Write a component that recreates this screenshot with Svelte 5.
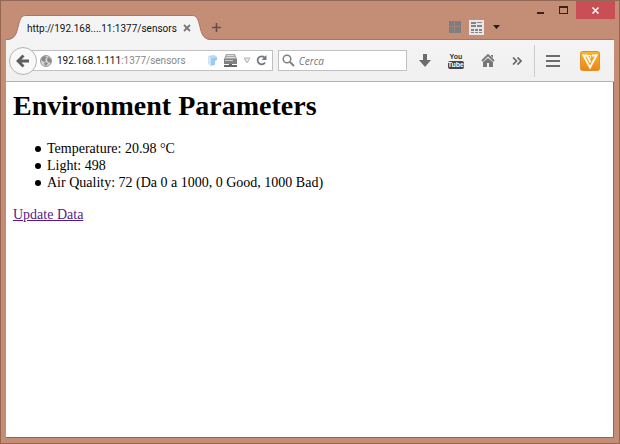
<script>
  let search = $state('');

  const readings = [
    { name: 'Temperature', value: '20.98 °C' },
    { name: 'Light', value: '498' },
    { name: 'Air Quality', value: '72 (Da 0 a 1000, 0 Good, 1000 Bad)' }
  ];
</script>

<div class="window">
  <header class="titlebar">
    <div class="tab">
      <svg class="curve" width="20" height="25" viewBox="0 0 20 25">
        <path class="fill" d="M0 25C8 25 10 20 11.500 14L13 8C14.500 3 16 .5 20 .5V25Z" />
        <path class="edge" d="M0 24.500C8 24.500 10 20 11.500 14L13 8C14.500 3 16 .5 20 .5" />
      </svg>
      <div class="tab-body">
        <span class="tab-title">http://192.168....11:1377/sensors</span>
        <button class="plain" aria-label="Close tab">
          <svg width="8" height="8" viewBox="0 0 8 8"><path d="M1 1l6 6M7 1L1 7" stroke="#777" stroke-width="1.800" /></svg>
        </button>
      </div>
      <svg class="curve" width="20" height="25" viewBox="0 0 20 25">
        <path class="fill" d="M20 25C12 25 10 20 8.500 14L7 8C5.500 3 4 .5 0 .5V25Z" />
        <path class="edge" d="M20 24.500C12 24.500 10 20 8.500 14L7 8C5.500 3 4 .5 0 .5" />
      </svg>
    </div>
    <button class="plain new-tab" aria-label="New tab">
      <svg width="9" height="9" viewBox="0 0 9 9"><path d="M4.500 0v9M0 4.500h9" stroke="#5f4f52" stroke-width="1.600" /></svg>
    </button>

    <div class="groups">
      <button class="plain" aria-label="Tile tabs">
        <svg width="14" height="14" viewBox="0 0 14 14">
          <path fill="#7b7f83" d="M1 1h5v5H1zM7 1h6v5H7zM1 7h5v6H1zM7 7h6v6H7z" />
          <path d="M6.500 1v12M1 6.500h12" stroke="#a08377" />
        </svg>
      </button>
      <button class="plain" aria-label="Tab groups">
        <svg width="15" height="15" viewBox="0 0 15 15">
          <path fill="#e9e6e4" d="M0 0h15v15H0z" />
          <path fill="#7f858a" d="M2 2h5v2H2zM2 5h5v2H2zM8 2h5v1H8zM8 5h5v2H8zM2 9h3v2H2zM6 9h3v2H6zM10 9h3v2h-3zM2 12h3v1H2zM6 12h3v1H6zM10 12h3v1h-3z" />
        </svg>
      </button>
      <button class="plain arrow" aria-label="List all tabs">
        <svg width="7" height="4" viewBox="0 0 7 4"><path fill="#2b1c16" d="M0 0h7L3.500 4z" /></svg>
      </button>
    </div>

    <div class="controls">
      <button class="plain" aria-label="Minimize">
        <svg width="9" height="10" viewBox="0 0 9 10"><path fill="#3c2015" d="M1 7h7v2H1z" /></svg>
      </button>
      <button class="plain" aria-label="Maximize">
        <svg width="9" height="8" viewBox="0 0 9 8"><path fill="#3c2015" fill-rule="evenodd" d="M0 0h9v8H0zM1 2v5h7V2z" /></svg>
      </button>
      <button class="plain close" aria-label="Close">
        <svg width="7" height="7" viewBox="0 0 7 7"><path d="M.5.5l6 6M6.500.5l-6 6" stroke="#fff" stroke-width="1.500" /></svg>
      </button>
    </div>
  </header>

  <nav class="toolbar">
    <button class="back" aria-label="Back">
      <svg width="14" height="14" viewBox="0 0 14 14"><path d="M13 7H3M7.500 1.500L2 7l5.500 5.500" fill="none" stroke="#5e5e5e" stroke-width="2.800" /></svg>
    </button>
    <div class="urlbar">
      <svg width="12" height="12" viewBox="0 0 12 12">
        <circle cx="6" cy="6" r="5.500" fill="#d4d4d4" stroke="#999" />
        <path fill="#8a8a8a" d="M2 2l3-1 2 2-2 1 1 2-2 1-3-2zM8 2l3 2v4l-3-1-1-2zM5 7l3 1-2 3-2-2z" />
      </svg>
      <a class="address" href="#sensors"><b>192.168.1.111</b>:1377/sensors</a>
      <svg width="11" height="13" viewBox="0 0 11 13">
        <path fill="#9ccbf2" d="M3 4l7-1v3l-2 1v4l-5 1z" />
        <path fill="#cfe6fa" d="M1 2l3 2v8l-3-2z" />
        <path fill="#b4d8f6" d="M1 2l6-1 3 2-6 1z" />
      </svg>
      <svg width="15" height="14" viewBox="0 0 15 14">
        <path fill="#a8a8a8" d="M3 0h9l2 5v4H1V5z" />
        <path d="M4 1.500h7M3 3.500h9" stroke="#ddd" />
        <path fill="#808080" d="M1 5h13v5H1z" />
        <path fill="#c8c8c8" d="M2 6h8v1H2z" />
        <path fill="#666" d="M6 10h3v1h5v2H1v-2h5z" />
      </svg>
      <button class="plain" aria-label="Show history">
        <svg width="8" height="7" viewBox="0 0 8 7"><path fill="#e8e8e8" stroke="#b5b5b5" d="M1 1h6L4 6z" /></svg>
      </button>
      <button class="plain" aria-label="Reload">
        <svg width="11" height="11" viewBox="0 0 11 11">
          <path d="M8.500 2.500A4 4 0 1 0 9 7.500" fill="none" stroke="#737a83" stroke-width="1.800" />
          <path fill="#737a83" d="M10.500 0v5H5.500z" />
        </svg>
      </button>
    </div>
    <label class="search">
      <svg width="13" height="13" viewBox="0 0 13 13">
        <circle cx="5" cy="5" r="3.800" fill="none" stroke="#808080" stroke-width="1.500" />
        <path d="M8 8l4 4" stroke="#808080" stroke-width="2" />
      </svg>
      <input type="text" placeholder="Cerca" aria-label="Cerca" bind:value={search} />
    </label>
    <div class="actions">
      <button class="plain" aria-label="Downloads">
        <svg width="12" height="13" viewBox="0 0 12 13"><path fill="#6c6c6c" d="M4 0h4v6h4l-6 7-6-7h4z" /></svg>
      </button>
      <button class="plain youtube" aria-label="YouTube">
        <span>You</span>
        <span class="tube">Tube</span>
      </button>
      <button class="plain" aria-label="Home">
        <svg width="14" height="13" viewBox="0 0 14 13">
          <path d="M1 7l6-6 6 6" fill="none" stroke="#777" stroke-width="1.800" />
          <path fill="#777" d="M10 1h2v3l-2-2zM7 4l5 4v5H8V9H6v4H2V8z" />
        </svg>
      </button>
      <button class="plain" aria-label="More tools">
        <svg width="10" height="8" viewBox="0 0 10 8"><path d="M1 .5L4.500 4 1 7.500M5.500.5L9 4 5.500 7.500" fill="none" stroke="#666" stroke-width="1.700" /></svg>
      </button>
    </div>
    <button class="plain menu" aria-label="Menu">
      <svg width="14" height="12" viewBox="0 0 14 12"><path fill="#6c6c6c" d="M0 0h14v2H0zM0 5h14v2H0zM0 10h14v2H0z" /></svg>
    </button>
    <button class="plain addon" aria-label="Download helper">
      <svg width="20" height="20" viewBox="0 0 20 20">
        <defs>
          <linearGradient id="orange" x2="0" y2="1">
            <stop offset="0" stop-color="#fbb62c" />
            <stop offset="1" stop-color="#ee8410" />
          </linearGradient>
        </defs>
        <rect x=".5" y=".5" width="19" height="19" rx="2" fill="url(#orange)" stroke="#dc9130" />
        <path d="M12 4.500h4.500L10 16.500 3.500 4.500H7l3.500 7" fill="none" stroke="#fff" stroke-width="1.800" />
        <path d="M8 4.500h3L9.500 8" fill="none" stroke="#fff" />
      </svg>
    </button>
  </nav>

  <main>
    <h1>Environment Parameters</h1>
    <ul>
      {#each readings as reading}
        <li>{reading.name}: {reading.value}</li>
      {/each}
    </ul>
    <a class="update" href="#update">Update Data</a>
  </main>
</div>

<style>
  .window {
    box-sizing: border-box;
    min-height: 100vh;
    display: flex;
    flex-direction: column;
    background: #c48d75;
    border: 1px solid #94664f;
    border-top-color: #936856;
    padding: 0 5px 5px;
    font-family: Roboto, "Open Sans", sans-serif;
    font-size: 10px;
    color: #111;
  }

  svg {
    display: block;
    flex: none;
  }

  .plain {
    display: flex;
    align-items: center;
    justify-content: center;
    flex: none;
    margin: 0;
    padding: 0;
    border: 0;
    background: none;
  }

  .titlebar {
    display: flex;
    align-items: flex-end;
    height: 39px;
    box-shadow: inset 0 -1px #a77561;
  }

  .tab {
    display: flex;
    height: 25px;
  }

  .fill {
    fill: #f5f4f4;
  }

  .edge {
    fill: none;
    stroke: #a77561;
  }

  .tab-body {
    display: flex;
    align-items: center;
    gap: 6px;
    box-sizing: border-box;
    padding: 0 1px;
    border-top: 1px solid #a77561;
    background: #f5f4f4;
  }

  .tab-title {
    white-space: nowrap;
  }

  .new-tab {
    height: 25px;
  }

  .groups {
    display: flex;
    align-items: center;
    gap: 7px;
    margin-left: auto;
    height: 26px;
  }

  .arrow {
    padding-left: 2px;
  }

  .controls {
    display: flex;
    align-items: flex-start;
    align-self: flex-start;
    gap: 14px;
    height: 18px;
    margin: 0 -1px 0 36px;
  }

  .controls .plain {
    height: 18px;
  }

  .controls .close {
    width: 39px;
    margin-left: -6px;
    background: #c94f54;
  }

  .toolbar {
    display: flex;
    align-items: center;
    height: 41px;
    padding: 0 14px 0 3px;
    background: linear-gradient(#f5f4f4, #f0f0f0);
    border-bottom: 1px solid #b3b3b3;
  }

  .back {
    display: flex;
    align-items: center;
    justify-content: center;
    flex: none;
    width: 28px;
    height: 28px;
    padding: 0;
    border: 1px solid #b4b4b4;
    border-radius: 50%;
    background: #f8f8f8;
    z-index: 1;
  }

  .urlbar,
  .search {
    display: flex;
    align-items: center;
    box-sizing: border-box;
    height: 21px;
    border: 1px solid #c0c0c0;
    background: #fff;
  }

  .urlbar {
    flex: 15 1 0;
    min-width: 0;
    gap: 5px;
    margin-left: -6px;
    padding: 0 5px 0 8px;
  }

  .address {
    flex: 1;
    min-width: 0;
    white-space: nowrap;
    color: #888;
    text-decoration: none;
  }

  .address b {
    font-weight: normal;
    color: #111;
  }

  .search {
    flex: 8 1 0;
    min-width: 0;
    gap: 4px;
    margin-left: 5px;
    padding: 0 3px;
  }

  .search input {
    flex: 1;
    min-width: 0;
    padding: 0;
    border: 0;
    outline: 0;
    background: none;
    font-family: "Open Sans", sans-serif;
    font-size: 10px;
  }

  .search input::placeholder {
    font-style: italic;
    color: #777;
  }

  .actions {
    display: flex;
    align-items: center;
    gap: 17px;
    padding: 0 12px;
  }

  .youtube {
    flex-direction: column;
    font-family: "Liberation Sans Narrow", "Liberation Sans", sans-serif;
    font-size: 7px;
    font-weight: bold;
    line-height: 8px;
    color: #333;
  }

  .tube {
    border-radius: 2px;
    background: #444;
    color: #fff;
  }

  .menu {
    height: 32px;
    padding: 0 20px 0 11px;
    border-left: 1px solid #ccc;
  }

  main {
    flex: 1;
    padding: 8px 7px;
    background: #fff;
    border-right: 1px solid #94664f;
    border-bottom: 1px solid #94664f;
    font-family: "Liberation Serif", "Times New Roman", serif;
    font-size: 14px;
    line-height: 17px;
    color: #000;
  }

  h1 {
    margin: 0;
    font-size: 28px;
    line-height: 32px;
  }

  ul {
    margin: 18px 0 15px;
    padding-left: 22px;
    list-style: none;
  }

  li {
    display: flex;
    align-items: center;
    gap: 6px;
  }

  li::before {
    content: "";
    width: 6px;
    height: 6px;
    border-radius: 50%;
    background: #000;
  }

  .update {
    color: #551a8b;
  }
</style>
